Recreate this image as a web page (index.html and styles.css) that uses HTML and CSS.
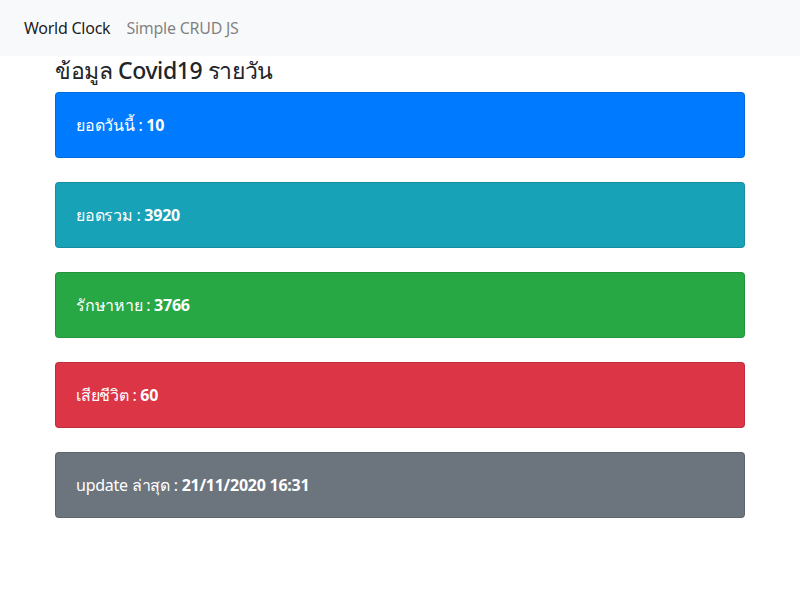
FILE: index.html
```html
<!DOCTYPE html>
<html lang="th">
<head>
<meta charset="utf-8">
<title>Covid19</title>
<link rel="stylesheet" href="styles.css">
</head>
<body>
<nav class="navbar">
  <a class="nav-link active" href="#">World Clock</a>
  <a class="nav-link" href="#">Simple CRUD JS</a>
</nav>
<main class="container">
  <h4 class="title">ข้อมูล Covid19 รายวัน</h4>
  <div class="card bg-primary"><div class="card-body">ยอดวันนี้ : <b>10</b></div></div>
  <div class="card bg-info"><div class="card-body">ยอดรวม : <b>3920</b></div></div>
  <div class="card bg-success"><div class="card-body">รักษาหาย : <b>3766</b></div></div>
  <div class="card bg-danger"><div class="card-body">เสียชีวิต : <b>60</b></div></div>
  <div class="card bg-secondary"><div class="card-body">update ล่าสุด : <b>21/11/2020 16:31</b></div></div>
</main>
</body>
</html>
```
FILE: styles.css
```css
* { box-sizing: border-box; }
body {
  margin: 0;
  font-family: "Noto Sans", "Open Sans", sans-serif;
  font-size: 16px;
  line-height: 1.5;
  letter-spacing: -0.25px;
  color: #212529;
  background: #fff;
}
.navbar {
  display: flex;
  align-items: center;
  padding: 8px 16px;
  background: #f8f9fa;
}
.nav-link {
  display: block;
  padding: 8px;
  color: rgba(0,0,0,.5);
  text-decoration: none;
}
.nav-link.active { color: rgba(0,0,0,.9); }
.container {
  width: 720px;
  margin: 0 auto;
  padding: 0 15px;
}
.title {
  margin: 0 0 7px;
  font-size: 23px;
  font-weight: 500;
  line-height: 29px;
  letter-spacing: -0.4px;
}
.card {
  border: 1px solid rgba(0,0,0,.125);
  border-radius: 4px;
  margin-bottom: 24px;
  color: #fff;
}
.card-body { padding: 20px; }
.card b { font-weight: 700; }
.bg-primary { background: #007bff; }
.bg-info { background: #17a2b8; }
.bg-success { background: #28a745; }
.bg-danger { background: #dc3545; }
.bg-secondary { background: #6c757d; }
```
